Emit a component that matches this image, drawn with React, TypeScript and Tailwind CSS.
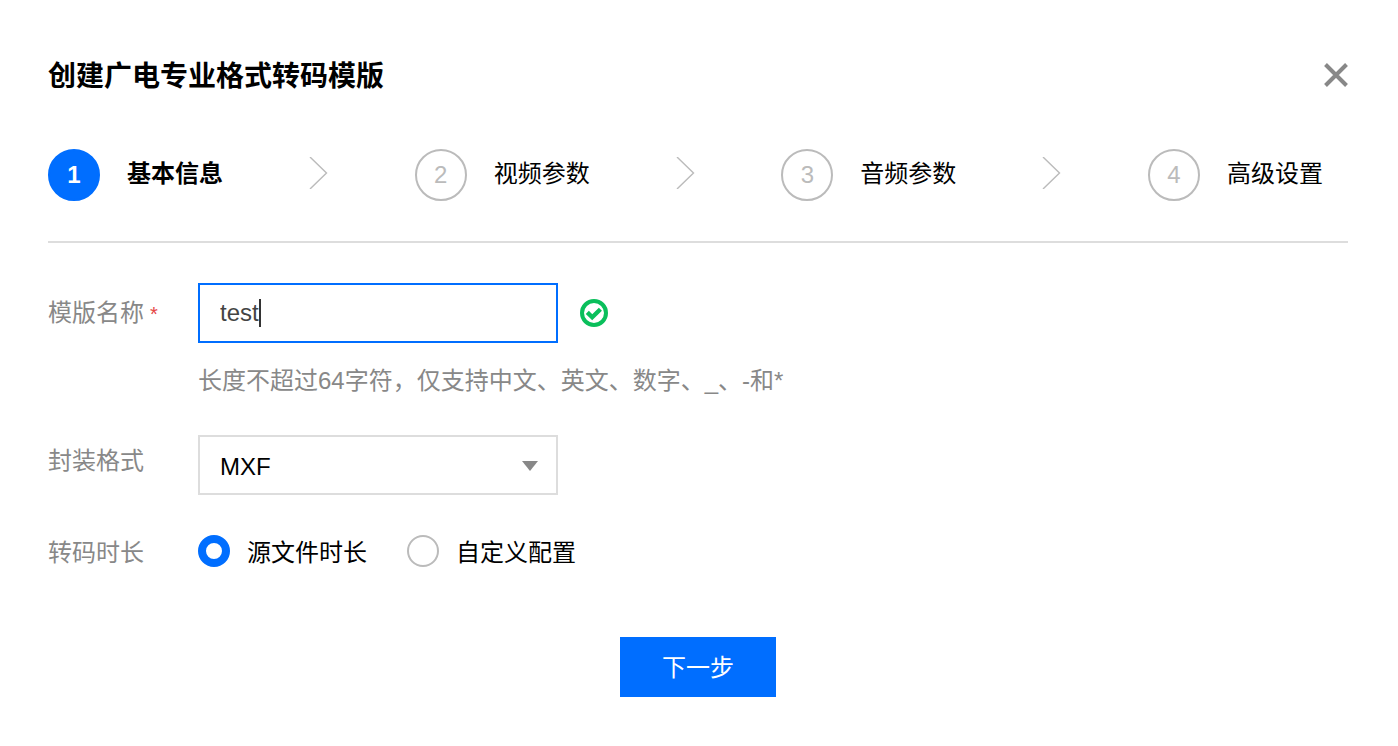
import { useState, type FC } from "react";
import clsx from "clsx";

const STEPS = ["基本信息", "视频参数", "音频参数", "高级设置"];
const FORMATS = ["MXF"];
const DURATIONS = [
	{ value: "source", label: "源文件时长" },
	{ value: "custom", label: "自定义配置" },
];

const CloseIcon: FC = () => (
	<svg className="w-6 h-6" viewBox="0 0 24 24" fill="none" stroke="#888888" strokeWidth="4">
		<path d="M1.5 1.5 22.5 22.5M22.5 1.5 1.5 22.5" />
	</svg>
);

const ChevronIcon: FC = () => (
	<svg className="w-5 h-8" viewBox="0 0 20 32" fill="none" stroke="#bbbbbb" strokeWidth="1.4">
		<path d="M1 0 17.5 16 1 32" />
	</svg>
);

const ValidIcon: FC = () => (
	<svg className="w-7 h-7" viewBox="0 0 28 28" fill="none" stroke="#0abf5b">
		<circle cx="14" cy="14" r="12" strokeWidth="4" />
		<path d="M7.3 13.4 12.2 18.2 20.4 10.2" strokeWidth="4.4" />
	</svg>
);

const Steps: FC<{ current: number }> = ({ current }) => (
	<ol className="flex pb-10 border-b-2 border-[#dddddd]">
		{STEPS.map((label, i) => {
			const active = i === current;
			const last = i === STEPS.length - 1;
			return (
				<li key={label} className={clsx("flex items-center", last ? "w-[200px]" : "flex-1")}>
					<span
						className={clsx(
							"w-[52px] h-[52px] shrink-0 rounded-full border-2 flex items-center justify-center",
							active
								? "bg-[#006eff] border-[#006eff] text-white font-bold"
								: "border-[#bbbbbb] text-[#bbbbbb]"
						)}
					>
						{i + 1}
					</span>
					<span className={clsx("ml-[27px] pb-0.5 whitespace-nowrap", active && "font-bold")}>
						{label}
					</span>
					{!last && (
						<span className="mx-auto pb-1">
							<ChevronIcon />
						</span>
					)}
				</li>
			);
		})}
	</ol>
);

export default function App() {
	const [name, setName] = useState("test");
	const [format, setFormat] = useState("MXF");
	const [duration, setDuration] = useState("source");

	return (
		<div className="min-h-screen bg-white pl-12 pr-[50px] pt-14 pb-12 text-2xl leading-9 text-black font-['Liberation_Sans','Noto_Sans_CJK_SC',sans-serif]">
			<header className="flex items-start justify-between mb-[51px]">
				<h1 className="text-[28px] leading-[42px] font-bold">创建广电专业格式转码模版</h1>
				<button type="button" aria-label="关闭" className="mt-[7px]">
					<CloseIcon />
				</button>
			</header>

			<Steps current={0} />

			<form className="mt-10" onSubmit={(e) => e.preventDefault()}>
				{/* Template name */}
				<div className="flex items-start">
					<label htmlFor="name" className="w-[150px] shrink-0 py-3 text-[#888888]">
						模版名称<span className="ml-1.5 text-xl text-[#e54545]">*</span>
					</label>
					<div>
						<div className="flex items-center gap-[22px]">
							<div className="relative">
								<input
									id="name"
									type="text"
									value={name}
									onChange={(e) => setName(e.target.value)}
									className="block w-[360px] h-[60px] px-5 border-2 border-[#006eff] text-[#444444] caret-transparent outline-none"
								/>
								{/* Caret follows the end of the value */}
								<span
									aria-hidden="true"
									className="absolute left-[22px] inset-y-4 flex border-r-2 border-[#333333] pointer-events-none"
								>
									<span className="invisible whitespace-pre">{name}</span>
								</span>
							</div>
							<ValidIcon />
						</div>
						<p className="mt-5 text-[#888888]">
							长度不超过64字符，仅支持中文、英文、数字、_、-和*
						</p>
					</div>
				</div>

				{/* Container format */}
				<div className="flex items-start mt-9">
					<label htmlFor="format" className="w-[150px] shrink-0 py-2 text-[#888888]">
						封装格式
					</label>
					<div className="relative">
						<select
							id="format"
							value={format}
							onChange={(e) => setFormat(e.target.value)}
							className="block appearance-none w-[360px] h-[60px] px-5 pt-1 border-2 border-[#dddddd] bg-white outline-none"
						>
							{FORMATS.map((item) => (
								<option key={item}>{item}</option>
							))}
						</select>
						<svg
							className="absolute right-5 top-[26px] w-4 h-2.5 pointer-events-none"
							viewBox="0 0 16 10"
							fill="#888888"
						>
							<path d="M0 0h16L8 10z" />
						</svg>
					</div>
				</div>

				{/* Duration */}
				<div className="flex items-center h-8 mt-10">
					<span id="duration" className="w-[150px] shrink-0 pt-1 text-[#888888]">
						转码时长
					</span>
					<div role="radiogroup" aria-labelledby="duration" className="flex gap-10">
						{DURATIONS.map((item) => (
							<label key={item.value} className="flex items-center h-8">
								<input
									type="radio"
									name="duration"
									value={item.value}
									checked={duration === item.value}
									onChange={() => setDuration(item.value)}
									className="appearance-none w-8 h-8 mr-[17px] rounded-full border-2 border-[#bbbbbb] bg-white checked:border-8 checked:border-[#006eff]"
								/>
								<span className="pt-1">{item.label}</span>
							</label>
						))}
					</div>
				</div>

				<div className="flex justify-center mt-[70px]">
					<button type="submit" className="w-[156px] h-[60px] pt-0.5 bg-[#006eff] text-white">
						下一步
					</button>
				</div>
			</form>
		</div>
	);
}
